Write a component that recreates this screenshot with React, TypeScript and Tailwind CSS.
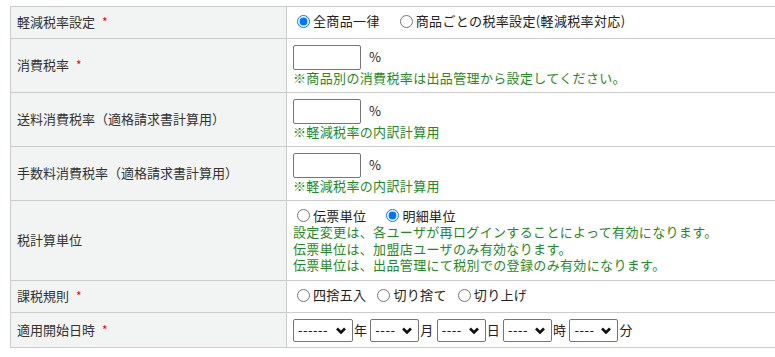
import type { ReactNode } from "react";

function Req() {
  return <span className="ml-[7px] text-[#ff0000] text-[12px]">*</span>;
}

function Label({ children, required }: { children: ReactNode; required?: boolean }) {
  return (
    <th className="w-[276px] border border-[#cccccc] bg-[#f2f3f3] pl-[6px] text-left align-middle font-normal text-[#333333]">
      {children}
      {required && <Req />}
    </th>
  );
}

function Radio({ label, checked, gap = "mr-[16px]" }: { label: string; checked?: boolean; gap?: string }) {
  return (
    <label className={`inline-flex items-center ${gap}`}>
      <input
        type="radio"
        defaultChecked={checked}
        className="ml-[4px] mr-[3px] h-[13px] w-[13px] accent-[#0075ff]"
      />
      <span className="text-[#222222]">{label}</span>
    </label>
  );
}

function RateInput({ note }: { note: string }) {
  return (
    <div>
      <div className="flex items-center">
        <input
          type="text"
          className="h-[25px] w-[68px] rounded-[2px] border border-[#767676] bg-white"
        />
        <span className="ml-[8px] text-[#222222]">%</span>
      </div>
      <div className="text-[#1f8a1f]">{note}</div>
    </div>
  );
}

function Select({ text, width }: { text: string; width: string }) {
  return (
    <span
      className={`inline-flex h-[23px] ${width} items-center justify-between rounded-[2px] border border-[#767676] bg-white pl-[4px] pr-[6px] text-[#111111]`}
    >
      <span className="tracking-[0.5px]">{text}</span>
      <svg width="10" height="7" viewBox="0 0 10 7">
        <polyline points="1,1.5 5,5.5 9,1.5" fill="none" stroke="#111" strokeWidth="2.6" />
      </svg>
    </span>
  );
}

export default function App() {
  const cell = "border border-[#cccccc] bg-white pl-[6px] align-middle tracking-[0.35px]";
  return (
    <div className="h-[357px] w-[775px] overflow-hidden bg-white font-['Noto_Sans_CJK_JP',sans-serif] text-[13px] leading-[16.5px]">
      <table className="ml-[10px] mt-[6px] w-[800px] border-collapse">
        <tbody>
          <tr className="h-[32px]">
            <Label required>軽減税率設定</Label>
            <td className={cell}>
              <Radio label="全商品一律" checked />
              <Radio label="商品ごとの税率設定(軽減税率対応)" />
            </td>
          </tr>
          <tr className="h-[54px]">
            <Label required>消費税率</Label>
            <td className={cell}>
              <RateInput note="※商品別の消費税率は出品管理から設定してください。" />
            </td>
          </tr>
          <tr className="h-[54px]">
            <Label>送料消費税率（適格請求書計算用）</Label>
            <td className={cell}>
              <RateInput note="※軽減税率の内訳計算用" />
            </td>
          </tr>
          <tr className="h-[54px]">
            <Label>手数料消費税率（適格請求書計算用）</Label>
            <td className={cell}>
              <RateInput note="※軽減税率の内訳計算用" />
            </td>
          </tr>
          <tr className="h-[80px]">
            <Label>税計算単位</Label>
            <td className={cell}>
              <div className="flex h-[17px] items-center">
                <Radio label="伝票単位" />
                <Radio label="明細単位" checked />
              </div>
              <div className="text-[#1f8a1f]">
                <p>設定変更は、各ユーザが再ログインすることによって有効になります。</p>
                <p>伝票単位は、加盟店ユーザのみ有効なります。</p>
                <p>伝票単位は、出品管理にて税別での登録のみ有効になります。</p>
              </div>
            </td>
          </tr>
          <tr className="h-[32px]">
            <Label required>課税規則</Label>
            <td className={cell}>
              <Radio label="四捨五入" gap="mr-[7px]" />
              <Radio label="切り捨て" gap="mr-[7px]" />
              <Radio label="切り上げ" gap="mr-[7px]" />
            </td>
          </tr>
          <tr className="h-[35px]">
            <Label required>適用開始日時</Label>
            <td className={cell}>
              <div className="flex items-center text-[#222222]">
                <Select text="------" width="w-[60px]" />
                <span className="ml-[1px] mr-[3px]">年</span>
                <Select text="----" width="w-[49px]" />
                <span className="ml-[1px] mr-[3px]">月</span>
                <Select text="----" width="w-[49px]" />
                <span className="ml-[1px] mr-[3px]">日</span>
                <Select text="----" width="w-[49px]" />
                <span className="ml-[1px] mr-[3px]">時</span>
                <Select text="----" width="w-[49px]" />
                <span className="ml-[1px]">分</span>
              </div>
            </td>
          </tr>
        </tbody>
      </table>
    </div>
  );
}
